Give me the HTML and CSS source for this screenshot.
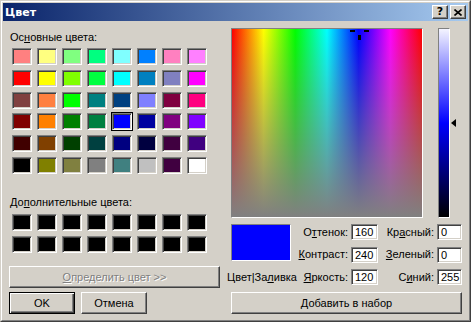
FILE: index.html
```html
<!DOCTYPE html>
<html lang="ru">
<head>
    <meta charset="UTF-8">
    <title>Цвет</title>
    <link rel="stylesheet" href="styles.css">
</head>
<body>
    <div class="dialog">
        <div class="frame">
            <div class="titlebar">
                <span class="title-text">Цвет</span>
                <div class="title-btns">
                    <button class="cap-btn">?</button>
                    <button class="cap-btn">
                        <svg width="8" height="7" viewBox="0 0 8 7"><path d="M0.5 0.5 L7.5 6.5 M7.5 0.5 L0.5 6.5" stroke="#000" stroke-width="1.6" fill="none"/></svg>
                    </button>
                </div>
            </div>

            <div class="dlg-body">
                <!-- left: palettes -->
                <div class="left-col">
                    <div class="label basic-label">Ос<u>н</u>овные цвета:</div>
                    <div class="swatches basic" id="basicColors"></div>

                    <div class="label custom-label">До<u>п</u>олнительные цвета:</div>
                    <div class="swatches custom" id="customColors"></div>

                    <button class="btn wide-btn disabled"><u>О</u>пределить цвет &gt;&gt;</button>

                    <div class="btn-row">
                        <button class="btn default-btn">OK</button>
                        <button class="btn">Отмена</button>
                    </div>
                </div>

                <!-- right: color editor -->
                <div class="right-col">
                    <div class="picker-row">
                        <div class="spectrum">
                            <span class="cross cross-l"></span>
                            <span class="cross cross-r"></span>
                            <span class="cross cross-b"></span>
                        </div>
                        <div class="lum-wrap">
                            <div class="lum-bar"></div>
                            <span class="lum-arrow"></span>
                        </div>
                    </div>

                    <div class="values">
                        <div class="preview"></div>
                        <div class="field-label">О<u>т</u>тенок:</div>
                        <div class="edit">160</div>
                        <div class="field-label">Кр<u>а</u>сный:</div>
                        <div class="edit">0</div>

                        <div class="field-label"><u>К</u>онтраст:</div>
                        <div class="edit">240</div>
                        <div class="field-label"><u>З</u>еленый:</div>
                        <div class="edit">0</div>

                        <div class="preview-caption">Цвет|За<u>л</u>ивка</div>
                        <div class="field-label"><u>Я</u>ркость:</div>
                        <div class="edit">120</div>
                        <div class="field-label">С<u>и</u>ний:</div>
                        <div class="edit">255</div>
                    </div>

                    <button class="btn wide-btn add-btn"><u>Д</u>обавить в набор</button>
                </div>
            </div>
        </div>
    </div>

    <script>
        // standard 48 colours of the Windows colour dialog
        const basic = [
            "#FF8080", "#FFFF80", "#80FF80", "#00FF80", "#80FFFF", "#0080FF", "#FF80C0", "#FF80FF",
            "#FF0000", "#FFFF00", "#80FF00", "#00FF40", "#00FFFF", "#0080C0", "#8080C0", "#FF00FF",
            "#804040", "#FF8040", "#00FF00", "#008080", "#004080", "#8080FF", "#800040", "#FF0080",
            "#800000", "#FF8000", "#008000", "#008040", "#0000FF", "#0000A0", "#800080", "#8000FF",
            "#400000", "#804000", "#004000", "#004040", "#000080", "#000040", "#400040", "#400080",
            "#000000", "#808000", "#808040", "#808080", "#408080", "#C0C0C0", "#400040", "#FFFFFF"
        ];

        function fillSwatches(id, colors, selected) {
            const box = document.getElementById(id);
            colors.forEach((c, i) => {
                const cell = document.createElement("div");
                cell.className = "swatch" + (i === selected ? " selected" : "");
                cell.style.background = c;
                box.appendChild(cell);
            });
        }

        fillSwatches("basicColors", basic, 28);
        fillSwatches("customColors", new Array(16).fill("#000000"), -1);
    </script>
</body>
</html>
```

FILE: styles.css
```css
/* Base */
* {
  margin: 0;
  padding: 0;
  box-sizing: border-box;
}

body {
  background: #d4d0c8;
  font-family: "Liberation Sans", Arial, sans-serif;
  font-size: 11px;
  line-height: 13px;
  color: #000;
}

u {
  text-decoration-thickness: 1px;
  text-underline-offset: 1px;
}

/* Window frame */
.dialog {
  width: 471px;
  height: 322px;
  border: 1px solid;
  border-color: #d4d0c8 #404040 #404040 #d4d0c8;
}

.frame {
  height: 100%;
  border: 1px solid;
  border-color: #fff #808080 #808080 #fff;
  padding: 1px;
}

.titlebar {
  height: 18px;
  display: flex;
  align-items: center;
  padding: 0 2px;
  background: linear-gradient(to right, #0a246a, #a6caf0);
}

.title-text {
  font-family: "DejaVu Sans", sans-serif;
  font-weight: bold;
  font-size: 11px;
  color: #fff;
}

.title-btns {
  margin-left: auto;
  display: flex;
  gap: 2px;
}

.cap-btn {
  width: 16px;
  height: 14px;
  display: flex;
  align-items: center;
  justify-content: center;
  background: #d4d0c8;
  border: 1px solid;
  border-color: #fff #404040 #404040 #fff;
  box-shadow: inset -1px -1px #808080;
  font-family: "DejaVu Sans", sans-serif;
  font-weight: bold;
  font-size: 11px;
  line-height: 12px;
  color: #000;
}

/* Body layout */
.dlg-body {
  display: grid;
  grid-template-columns: 211px 231px;
  column-gap: 11px;
  padding: 7px 6px 0;
}

.left-col,
.right-col {
  display: flex;
  flex-direction: column;
}

.basic-label {
  margin-top: 3px;
  padding-left: 1px;
}

.custom-label {
  margin-top: 22px;
  padding-left: 1px;
}

.swatches {
  display: grid;
  grid-template-columns: repeat(8, 20px);
  column-gap: 5px;
  padding-left: 3px;
}

.basic {
  margin-top: 4px;
  grid-template-rows: repeat(6, 17px);
  row-gap: 4.8px;
}

.custom {
  margin-top: 5px;
  grid-template-rows: repeat(2, 17px);
  row-gap: 5px;
}

.swatch {
  border: 1px solid;
  border-color: #808080 #fff #fff #808080;
  box-shadow: inset 1px 1px #404040, inset -1px -1px #d4d0c8;
}

.swatch.selected {
  outline: 1px solid #000;
}

/* Buttons */
.btn {
  height: 22px;
  width: 66px;
  background: #d4d0c8;
  border: 1px solid;
  border-color: #fff #404040 #404040 #fff;
  box-shadow: inset -1px -1px #808080;
  font-family: "Liberation Sans", Arial, sans-serif;
  font-size: 11px;
  color: #000;
}

.wide-btn {
  width: 100%;
}

.disabled {
  margin-top: 13px;
  color: #808080;
  text-shadow: 1px 1px #fff;
}

.btn-row {
  margin-top: 4px;
  display: flex;
  gap: 6px;
}

.default-btn {
  border: 1px solid #000;
  box-shadow: inset 1px 1px #fff, inset -1px -1px #404040, inset -2px -2px #808080;
}

/* Spectrum and luminance */
.picker-row {
  display: flex;
}

.spectrum {
  position: relative;
  width: 192px;
  height: 190px;
  overflow: hidden;
  border: 1px solid;
  border-color: #808080 #fff #fff #808080;
  background:
    linear-gradient(to bottom, rgba(128, 128, 128, 0), #808080),
    linear-gradient(to right, #f00, #ff0, #0f0, #0ff, #00f, #f0f, #f00);
}

.cross {
  position: absolute;
  background: #000;
}

.cross-l { left: 118px; top: 1px; width: 5px; height: 2px; }
.cross-r { left: 132px; top: 1px; width: 5px; height: 2px; }
.cross-b { left: 126px; top: 6px; width: 3px; height: 5px; }

.lum-wrap {
  position: relative;
  margin-left: 15px;
}

.lum-bar {
  width: 12px;
  height: 190px;
  border: 1px solid;
  border-color: #808080 #fff #fff #808080;
  background: linear-gradient(to bottom, #f4f4ff, #0000ff 50%, #000);
}

.lum-arrow {
  position: absolute;
  left: 13px;
  top: 91px;
  border-right: 5px solid #000;
  border-top: 4.5px solid transparent;
  border-bottom: 4.5px solid transparent;
}

/* Value fields */
.values {
  margin-top: 6px;
  display: grid;
  grid-template-columns: 60px 60px 27px 59px 25px;
  grid-template-rows: repeat(3, 16px);
  row-gap: 6.5px;
  align-items: center;
}

.preview {
  grid-row: 1 / span 2;
  align-self: start;
  height: 37px;
  background: #0000ff;
  border: 1px solid;
  border-color: #808080 #fff #fff #808080;
}

.preview-caption {
  margin: 0 -6px 0 -4px;
  text-align: center;
  white-space: nowrap;
}

.field-label {
  text-align: right;
  padding-right: 3px;
  white-space: nowrap;
}

.edit {
  height: 16px;
  background: #fff;
  padding-left: 3px;
  line-height: 14px;
  border: 1px solid;
  border-color: #808080 #fff #fff #808080;
  box-shadow: inset 1px 1px #404040, inset -1px -1px #d4d0c8;
}

.add-btn {
  margin-top: 7px;
}
```
